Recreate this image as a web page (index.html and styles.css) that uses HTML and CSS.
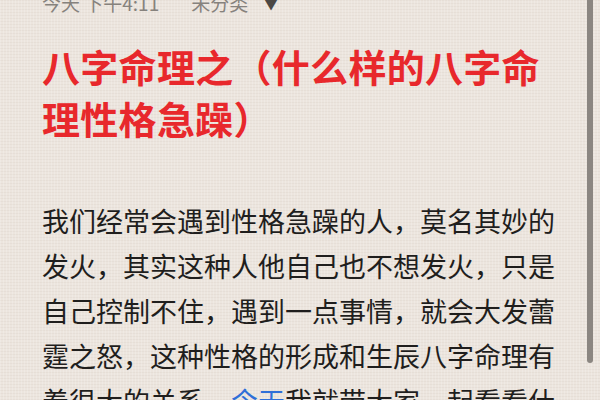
FILE: index.html
```html
<!DOCTYPE html>
<html lang="zh-CN">
<head>
  <meta charset="UTF-8"/>
  <meta name="viewport" content="width=device-width,initial-scale=1.0"/>
  <title>八字命理之（什么样的八字命理性格急躁）</title>
  <link rel="stylesheet" href="styles.css">
</head>
<body>
  <div class="page">
    <!-- META -->
    <div class="meta">
      <span class="meta-time">今天 下午4:11</span>
      <span class="meta-cat">未分类 <span class="caret">▼</span></span>
    </div>

    <!-- ARTICLE -->
    <h1 class="title">八字命理之（什么样的八字命理性格急躁）</h1>
    <p class="content">
      我们经常会遇到性格急躁的人，莫名其妙的发火，其实这种人他自己也不想发火，只是自己控制不住，遇到一点事情，就会大发蕾霆之怒，这种性格的形成和生辰八字命理有着很大的关系，<a class="link" href="#">今天</a>我就带大家一起看看什么样的八字命理性格急躁。
    </p>
  </div>

  <div class="scrollbar"></div>
</body>
</html>
```

FILE: styles.css
```css
/* RESET */
* {
  margin: 0;
  padding: 0;
  box-sizing: border-box;
}

html, body {
  height: 100%;
  overflow: hidden;
}

body {
  font-family: "Noto Sans CJK SC", "Noto Sans", sans-serif;
  background-color: #ece5de;
  background-image:
    repeating-linear-gradient(90deg, rgba(255,255,255,0.18) 0 1px, transparent 1px 3px),
    repeating-linear-gradient(0deg, rgba(120,100,80,0.05) 0 1px, transparent 1px 3px);
  color: #1f1e1d;
  position: relative;
}

/* LAYOUT */
.page {
  width: 558px;
  padding-left: 42px;
}

/* META */
.meta {
  display: flex;
  gap: 32px;
  font-size: 19px;
  line-height: 20px;
  margin-top: -7px;
  color: #86827d;
}

.caret {
  font-size: 13px;
  margin-left: 12px;
  color: #4a4744;
  vertical-align: 2px;
}

/* TITLE */
.title {
  margin-top: 26px;
  font-size: 38px;
  line-height: 52px;
  font-weight: 700;
  color: #e8282c;
  letter-spacing: 0.3px;
}

/* CONTENT */
.content {
  margin-top: 54px;
  font-size: 27px;
  line-height: 45px;
  color: #1f1e1d;
}

.link {
  color: #2f6fd8;
  text-decoration: none;
}

/* SCROLLBAR */
.scrollbar {
  position: absolute;
  top: -6px;
  left: 587px;
  width: 6px;
  height: 369px;
  border-radius: 3px;
  background: #8b8681;
}
```
